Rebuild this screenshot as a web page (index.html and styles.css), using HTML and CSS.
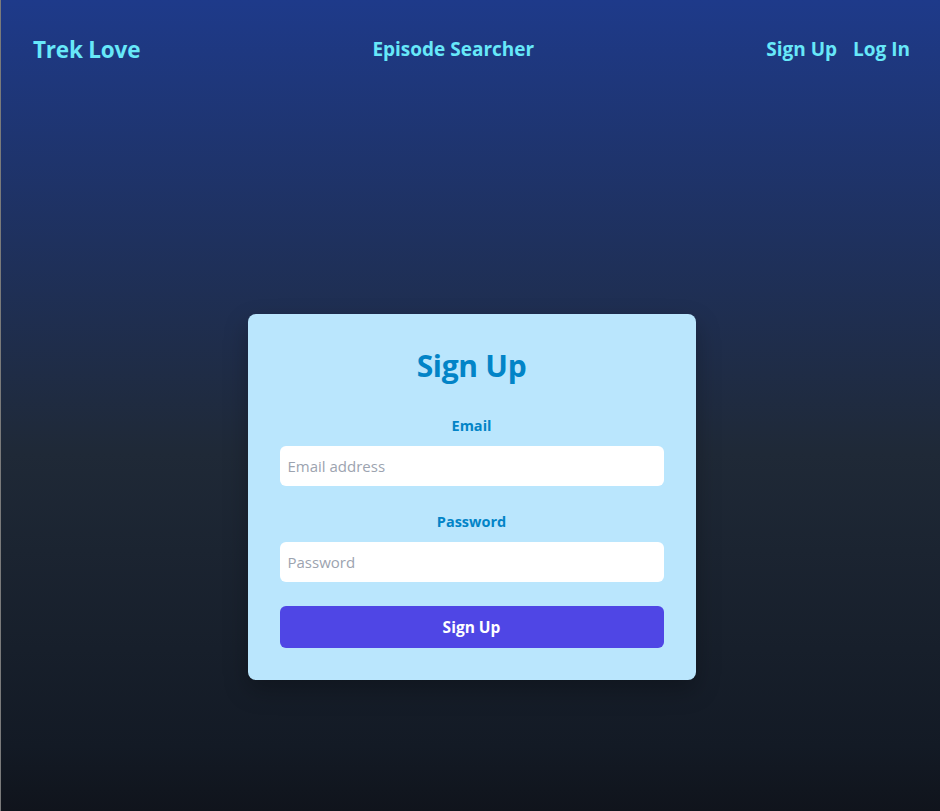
FILE: index.html
```html
<!DOCTYPE html>
<html lang="en">
<head>
<meta charset="utf-8">
<title>Trek Love - Sign Up</title>
<link rel="stylesheet" href="styles.css">
</head>
<body>
<div class="page">
  <nav class="nav">
    <a class="brand" href="#">Trek Love</a>
    <a class="nav-link" href="#">Episode Searcher</a>
    <div class="nav-right">
      <a class="nav-link" href="#">Sign Up</a>
      <a class="nav-link" href="#">Log In</a>
    </div>
  </nav>
  <main class="main">
    <form class="card">
      <h1 class="title">Sign Up</h1>
      <label class="label" for="email">Email</label>
      <input class="input" id="email" type="email" placeholder="Email address">
      <label class="label" for="password">Password</label>
      <input class="input" id="password" type="password" placeholder="Password">
      <button class="btn" type="button">Sign Up</button>
    </form>
  </main>
</div>
</body>
</html>
```

FILE: styles.css
```css
html, body {
  margin: 0;
  padding: 0;
  height: 100%;
}
body {
  font-family: "Open Sans", "Noto Sans", sans-serif;
  overflow: hidden;
}
.page {
  height: 811px;
  box-sizing: border-box;
  border-left: 1px solid #7a7a7a;
  background: linear-gradient(to bottom, #1e3a8a 0%, #1f2937 56%, #131a25 92%, #10141c 100%);
  display: flex;
  flex-direction: column;
}
.nav {
  height: 98px;
  box-sizing: border-box;
  padding: 0 30px 0 32px;
  display: flex;
  align-items: center;
  justify-content: space-between;
}
.brand {
  color: #67e8f9;
  font-size: 22.5px;
  font-weight: 700;
  text-decoration: none;
  letter-spacing: -0.2px;
}
.nav-link {
  color: #67e8f9;
  font-size: 19px;
  font-weight: 700;
  text-decoration: none;
}
.nav-right {
  display: flex;
  gap: 16px;
}
.main {
  display: flex;
  justify-content: center;
  padding-top: 216px;
  padding-left: 2px;
}
.card {
  width: 448px;
  box-sizing: border-box;
  background: #bae6fd;
  border-radius: 8px;
  padding: 32px;
  display: flex;
  flex-direction: column;
  box-shadow: 0 10px 25px rgba(0,0,0,0.25);
}
.title {
  margin: 0 0 30px;
  text-align: center;
  color: #0284c7;
  font-size: 30px;
  font-weight: 700;
  line-height: 40px;
  letter-spacing: -0.3px;
}
.label {
  text-align: center;
  color: #0284c7;
  font-size: 14.5px;
  font-weight: 700;
  line-height: 20px;
  margin-bottom: 10px;
}
.input {
  height: 40px;
  box-sizing: border-box;
  border: none;
  border-radius: 6px;
  background: #fff;
  padding: 0 8px;
  font-family: inherit;
  font-size: 15px;
  color: #111;
  margin-bottom: 26px;
  outline: none;
}
.input::placeholder {
  color: #9ca3af;
}
.btn {
  height: 42px;
  border: none;
  border-radius: 6px;
  background: #4f46e5;
  color: #fff;
  font-family: inherit;
  font-size: 15.5px;
  font-weight: 700;
  margin-top: -2px;
}
```
